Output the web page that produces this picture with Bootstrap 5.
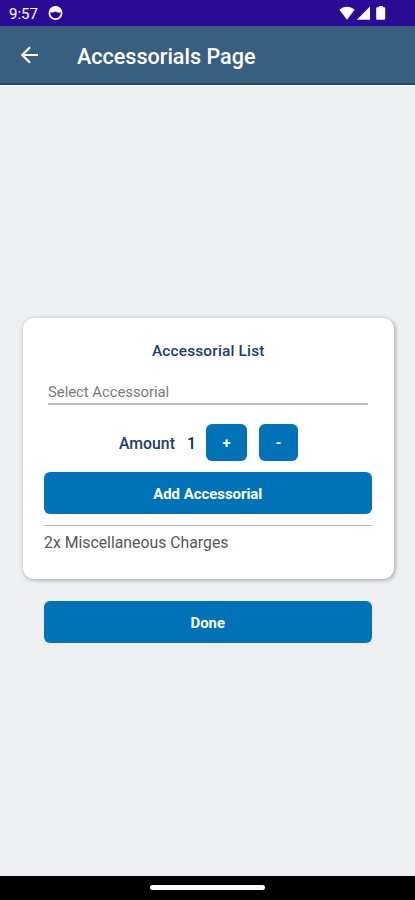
<!DOCTYPE html>
<html lang="en">
<head>
<meta charset="utf-8">
<meta name="viewport" content="width=device-width, initial-scale=1">
<title>Accessorials Page</title>
<link href="https://cdn.jsdelivr.net/npm/bootstrap@5.3.0/dist/css/bootstrap.min.css" rel="stylesheet">
<style>
body{font-family:Roboto,"Liberation Sans",sans-serif;background:#eeeff1;height:900px;overflow:hidden}
.status-bar{height:26px;background:#2b0a96;color:#fff;padding:0 28px 0 9px}
.status-time{width:38px;font-size:15px;padding-top:2px}
.status-bar svg,.app-bar svg{display:block}
.app-bar{height:59px;background:#385f7f;border-bottom:2px solid #1c4a6c;padding:2px 0 0 20px;box-shadow:0 1px 1px #fff}
.app-title{font-size:21.6px;font-weight:500;letter-spacing:-.02px;color:#fff;margin:2px 0 0 38px;line-height:26px}
.page-main{padding:0 21.5px 0 23px}
.panel{height:261px;border:0;border-radius:11px;padding:23px 22px 0 21px;box-shadow:1px 1px 4px rgba(0,0,0,.34);background:#fff}
.panel-title{font-size:15.4px;line-height:20px;font-weight:500;letter-spacing:.18px;color:#1b4068;margin:0 0 0 1px}
.picker{height:33px;margin:11px 4px 0;padding:9px 0 0;border:0;border-bottom:2px solid #bcbcbc;border-radius:0;background:none;font-size:14.9px;line-height:20px;color:#7b7b7b;letter-spacing:-.05px}
.amount-row{height:37px;margin-top:19px;padding-left:75px;color:#1b4068;font-size:15.8px;font-weight:500}
.amount-label{width:68px;padding-top:2px}
.amount-value{width:19px;padding-top:2px;color:#13285e}
.btn-brand{--bs-btn-color:#fff;--bs-btn-bg:#0072b8;--bs-btn-border-color:#0072b8;--bs-btn-hover-color:#fff;--bs-btn-hover-bg:#0065a5;border:0;border-radius:6px;padding:0;font-weight:700;font-size:14.9px}
.btn-wide{height:42px;padding-top:2px}
.btn-step{height:37px;padding-top:2px}
.btn-plus{width:41px;margin-right:12px}
.btn-minus{width:39px}
.charges{margin-top:11px;border-top:1px solid #b5b5b5;padding-top:7px;font-size:15.8px;line-height:20px;color:#585858}
.add-button{margin-top:11px}
.done-wrap{padding:22px 22px 0 21px}
.nav-strip{height:24px;background:#000}
.home-pill{width:115px;height:5px;margin-bottom:1px;background:#fff}
</style>
</head>
<body class="d-flex flex-column">
<div class="status-bar d-flex align-items-center">
  <span class="status-time">9:57</span>
  <svg width="17" height="16" viewBox="0 0 17 16"><circle cx="8.500" cy="8" r="6.100" fill="none" stroke="#fff" stroke-width="1.700"/><path d="M3 5.200a6 6 0 0 1 11 0L13.600 7C12 8 10.500 7.600 8.500 6.600 6.500 7.600 5 8 3.400 7z" fill="#fff"/></svg>
  <svg class="ms-auto" width="48" height="16" viewBox="0 0 48 16" fill="#fff"><path d="M.4 4.700C4.800.6 11.200.6 15.600 4.700L8 14.700z"/><path d="M17.800 14.700L31 1.500v13.200z"/><path d="M39.800 2.300V1h4v1.300h1.400a1 1 0 0 1 1 1v10.400a1 1 0 0 1-1 1h-7a1 1 0 0 1-1-1V3.300a1 1 0 0 1 1-1z"/></svg>
</div>
<header class="app-bar d-flex align-items-center">
  <svg width="19" height="20" viewBox="0 0 19 20" fill="none" stroke="#fff" stroke-width="2.200"><path d="M18 9H2.500M10 1.300L2.300 9l7.700 7.700"/></svg>
  <h1 class="app-title">Accessorials Page</h1>
</header>
<main class="page-main flex-grow-1 d-flex flex-column justify-content-center">
  <section class="card panel">
    <h2 class="panel-title text-center">Accessorial List</h2>
    <button type="button" class="picker text-start">Select Accessorial</button>
    <div class="amount-row d-flex align-items-center">
      <span class="amount-label">Amount</span>
      <span class="amount-value">1</span>
      <button type="button" class="btn btn-brand btn-step btn-plus">+</button>
      <button type="button" class="btn btn-brand btn-step btn-minus">-</button>
    </div>
    <button type="button" class="btn btn-brand btn-wide w-100 add-button">Add Accessorial</button>
    <div class="charges">2x Miscellaneous Charges</div>
  </section>
  <div class="done-wrap"><button type="button" class="btn btn-brand btn-wide w-100">Done</button></div>
</main>
<footer class="nav-strip d-flex justify-content-center align-items-center"><div class="home-pill rounded-pill"></div></footer>
<script src="https://cdn.jsdelivr.net/npm/bootstrap@5.3.0/dist/js/bootstrap.bundle.min.js"></script>
</body>
</html>
